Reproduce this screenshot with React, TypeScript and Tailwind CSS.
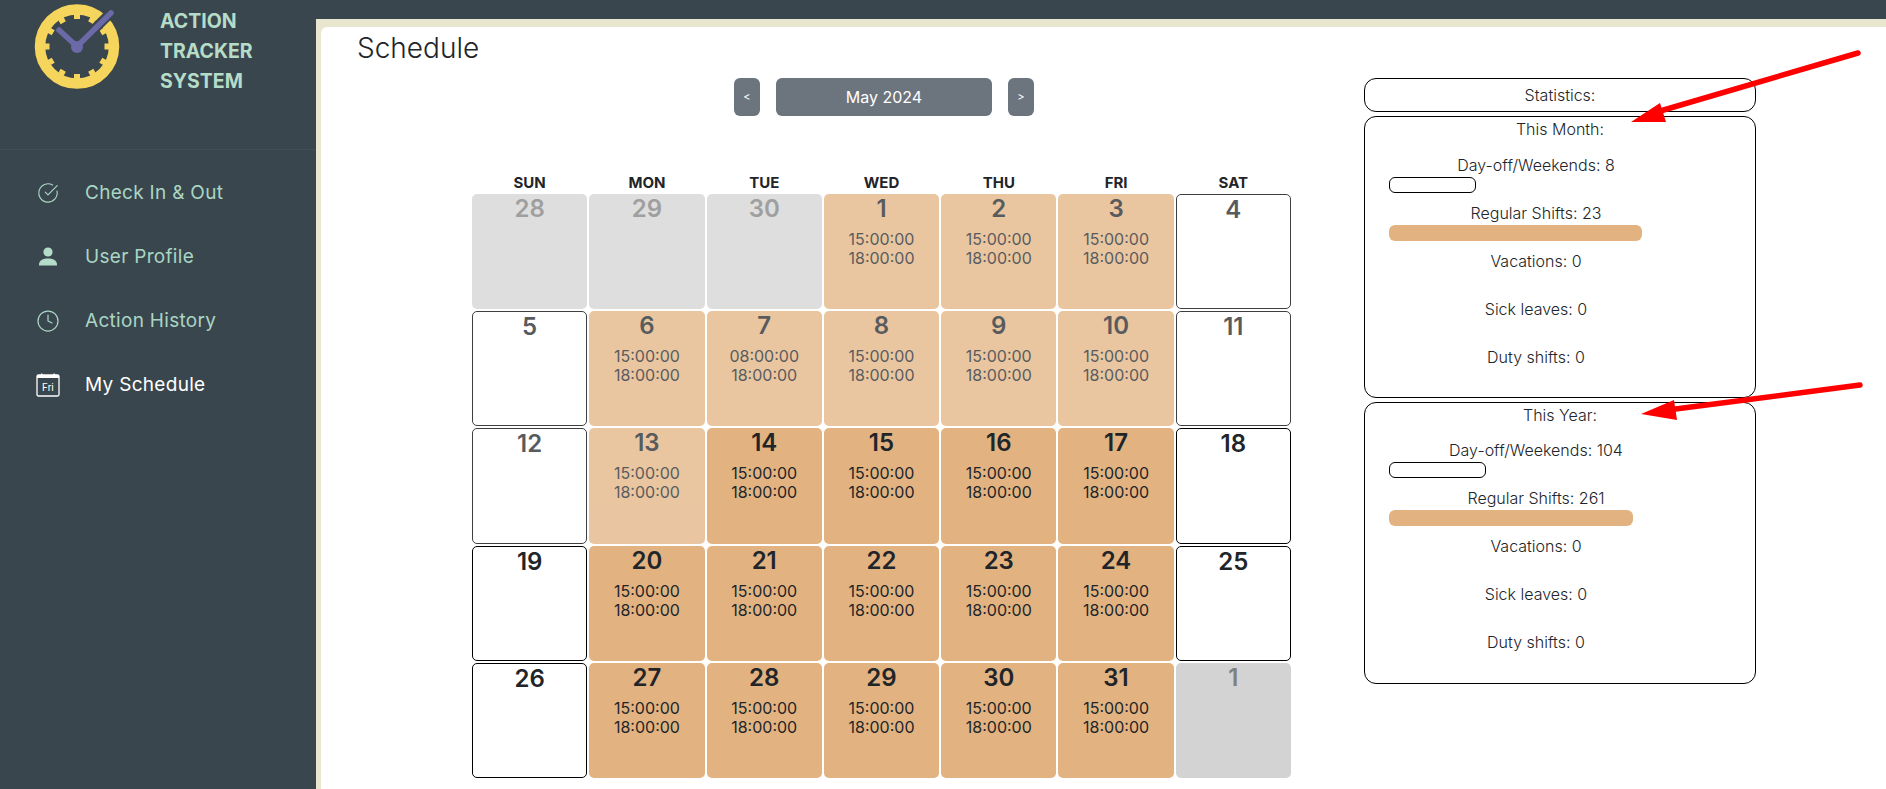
import React from 'react';
import { CircleCheckBig, Clock } from 'lucide-react';

type Kind = 'prev' | 'past' | 'off' | 'pastOff' | 'shift' | 'next';

interface Day {
  n: number;
  kind: Kind;
  start?: string;
}

const HEADERS = ['SUN', 'MON', 'TUE', 'WED', 'THU', 'FRI', 'SAT'];

const buildDays = (): Day[] => {
  const days: Day[] = [
    { n: 28, kind: 'prev' },
    { n: 29, kind: 'prev' },
    { n: 30, kind: 'prev' },
  ];
  for (let n = 1; n <= 31; n++) {
    const col = (n + 2) % 7;
    const weekend = col === 0 || col === 6;
    if (weekend) days.push({ n, kind: n <= 12 ? 'pastOff' : 'off' });
    else days.push({ n, kind: n <= 13 ? 'past' : 'shift', start: n === 7 ? '08:00:00' : '15:00:00' });
  }
  days.push({ n: 1, kind: 'next' });
  return days;
};

const cellClass: Record<Kind, string> = {
  prev: 'bg-[#d3d3d3] text-[#808080] opacity-75',
  next: 'bg-[#d3d3d3] text-[#808080]',
  past: 'bg-[#e2b381] text-[#212529] opacity-75',
  pastOff: 'bg-white border border-black text-[#212529] opacity-75',
  off: 'bg-white border border-black text-[#212529]',
  shift: 'bg-[#e2b381] text-[#212529]',
};

const Logo = () => (
  <svg width="120" height="94" viewBox="0 0 120 94" className="shrink-0">
    <circle cx="77" cy="46.5" r="37" fill="none" stroke="#f6d55c" strokeWidth="10.5" />
    {Array.from({ length: 12 }).map((_, i) => (
      <rect key={i} x="74" y="14" width="6" height="5" fill="#f6d55c" transform={`rotate(${i * 30} 77 46.5)`} />
    ))}
    <line x1="77" y1="46.5" x2="116" y2="7.5" stroke="#3a464d" strokeWidth="10" />
    <path d="M59 30 L77 46.5 L111 13" fill="none" stroke="#6b69a8" strokeWidth="5.5" strokeLinecap="round" strokeLinejoin="round" />
    <circle cx="77" cy="47" r="6" fill="#6b69a8" />
  </svg>
);

const UserIcon = () => (
  <svg width="24" height="24" viewBox="0 0 24 24" fill="#b5dcc8">
    <circle cx="12" cy="7" r="4.6" />
    <path d="M3 19.5 C3 15 7.5 13.4 12 13.4 C16.5 13.4 21 15 21 19.5 L21 20.5 L3 20.5 Z" />
  </svg>
);

const CalendarIcon = () => (
  <svg width="24" height="24" viewBox="0 0 24 24">
    <rect x="1" y="2" width="22" height="21" rx="1.5" fill="none" stroke="#fff" strokeWidth="1.3" />
    <rect x="1" y="2" width="22" height="3" fill="#fff" />
    <rect x="5" y="0.5" width="1.4" height="2" fill="#fff" />
    <rect x="17.5" y="0.5" width="1.4" height="2" fill="#fff" />
    <text x="12" y="18" fontSize="10" textAnchor="middle" fill="#fff" fontFamily="Roboto, sans-serif">Fri</text>
  </svg>
);

const NavItem = ({ icon, label, active }: { icon: React.ReactNode; label: string; active?: boolean }) => (
  <div className={`flex h-16 items-center text-[19px] tracking-[0.3px] ${active ? 'text-white' : 'text-[#a9d6c4]'}`}>
    <div className="flex w-6 justify-center">{icon}</div>
    <span className="ml-[25px]">{label}</span>
  </div>
);

const StatRow = ({ label, barClass }: { label: string; barClass?: string }) => (
  <div className="h-12">
    <div className="h-6 text-center leading-6">{label}</div>
    {barClass && <div className={`h-4 rounded-[6px] ${barClass}`} />}
  </div>
);

const StatPanel = ({ title, off, offBar, reg, regBar, rowsClass }: { title: string; off: number; offBar: string; reg: number; regBar: string; rowsClass: string }) => (
  <div className="h-[282px] rounded-xl border border-black font-light">
    <div className="h-6 text-center leading-6">{title}</div>
    <div className={`ml-[24px] w-[294px] ${rowsClass}`}>
      <StatRow label={`Day-off/Weekends: ${off}`} barClass={`border border-black bg-white ${offBar}`} />
      <StatRow label={`Regular Shifts: ${reg}`} barClass={`bg-[#e2b381] ${regBar}`} />
      <StatRow label="Vacations: 0" />
      <StatRow label="Sick leaves: 0" />
      <StatRow label="Duty shifts: 0" />
    </div>
  </div>
);

export default function App() {
  const days = buildDays();
  return (
    <div className="relative flex h-screen w-full overflow-hidden bg-[#3a464d] font-['Inter',sans-serif] text-[#212529]">
      <aside className="w-[316px] shrink-0 bg-[#3a464d]">
        <div className="flex h-[150px] items-start border-b border-[#434f56]">
          <Logo />
          <div className="ml-10 pt-[6px] text-[19.5px] font-bold leading-[30px] text-[#b5dcc8]">
            <div>ACTION</div>
            <div>TRACKER</div>
            <div>SYSTEM</div>
          </div>
        </div>
        <nav className="pl-9 pt-[11px]">
          <NavItem icon={<CircleCheckBig size={22} strokeWidth={1.25} />} label="Check In & Out" />
          <NavItem icon={<UserIcon />} label="User Profile" />
          <NavItem icon={<Clock size={24} strokeWidth={1.25} />} label="Action History" />
          <NavItem icon={<CalendarIcon />} label="My Schedule" active />
        </nav>
      </aside>

      <div className="mt-[19px] flex-1 bg-[#e8e6cf] pl-[5px] pt-2">
        <main className="h-full rounded-tl-[6px] bg-white pl-[36px] pt-1">
          <h1 className="text-[28px] font-light leading-[34px]">Schedule</h1>
          <div className="mt-[13px] flex">
            <div className="ml-[115px] w-[819px]">
              <div className="ml-[5px] flex justify-center gap-4 text-white">
                <button className="flex h-[38px] w-[26px] items-center justify-center rounded-[6px] bg-[#6c757d] text-[11px]">&lt;</button>
                <button className="flex h-[38px] w-[216px] items-center justify-center rounded-[6px] bg-[#6c757d] text-[16px]">May 2024</button>
                <button className="flex h-[38px] w-[26px] items-center justify-center rounded-[6px] bg-[#6c757d] text-[11px]">&gt;</button>
              </div>
              <div className="mt-[55px] grid h-[23px] grid-cols-7 gap-[2px] text-center text-[15px] font-bold leading-[23px]">
                {HEADERS.map(h => (
                  <div key={h}>{h}</div>
                ))}
              </div>
              <div className="grid grid-cols-7 gap-[2px]">
                {days.map((d, i) => (
                  <div key={i} className={`h-[115.2px] rounded-[5px] text-center ${cellClass[d.kind]}`}>
                    <div className="pt-[1px] text-[24px] font-semibold leading-[28px]">{d.n}</div>
                    {d.start && (
                      <div className="mt-[7px] text-[16px] leading-[19px]">
                        <div>{d.start}</div>
                        <div>18:00:00</div>
                      </div>
                    )}
                  </div>
                ))}
              </div>
            </div>

            <div className="ml-[73px] flex w-[392px] flex-col gap-1">
              <div className="h-[34px] rounded-xl border border-black text-center font-light leading-[32px]">Statistics:</div>
              <StatPanel title="This Month:" off={8} offBar="w-[87px]" reg={23} regBar="w-[253px]" rowsClass="mt-3" />
              <StatPanel title="This Year:" off={104} offBar="w-[97px]" reg={261} regBar="w-[244px]" rowsClass="mt-[11px]" />
            </div>
          </div>
        </main>
      </div>

      {/* red annotation arrows drawn over the screenshot */}
      <svg className="pointer-events-none absolute left-0 top-0" width="1886" height="789">
        <line x1="1858" y1="53" x2="1650" y2="114" stroke="#ff0000" strokeWidth="5.5" strokeLinecap="round" />
        <polygon points="1631,122 1660,103 1666,122" fill="#ff0000" />
        <line x1="1860" y1="385" x2="1660" y2="411" stroke="#ff0000" strokeWidth="5.5" strokeLinecap="round" />
        <polygon points="1641,414 1674,400 1677,420" fill="#ff0000" />
      </svg>
    </div>
  );
}
